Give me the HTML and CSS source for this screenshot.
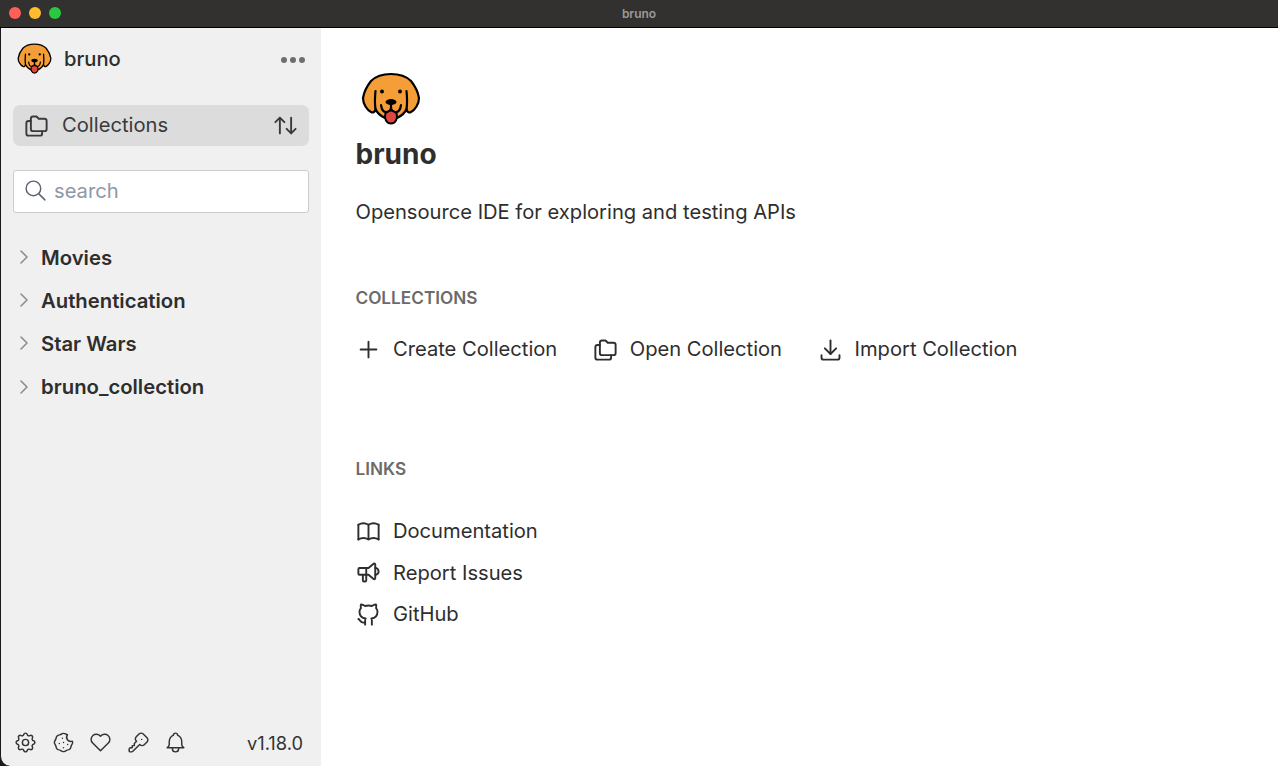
FILE: index.html
```html
<!DOCTYPE html>
<html lang="en">
<head>
    <meta charset="UTF-8">
    <title>bruno</title>
    <link rel="stylesheet" href="styles.css">
</head>
<body>
<svg class="defs" width="0" height="0">
    <symbol id="dog" viewBox="0 0 60 54">
        <path class="dog-head" d="M30 2C22 2 15 4 10 9C6 14 3 20 2 26C2 32 6 38 10 40C12 41 14 40 14.500 37C16 41 20 44 24 46L36 46C40 44 44 41 45.500 37C46 40 48 41 50 40C54 38 58 32 58 26C57 20 54 14 50 9C45 4 38 2 30 2z"/>
        <path class="dog-line" d="M14.500 37C13.500 31 14 24 14.500 19M45.500 37C46.500 31 46 24 45.500 19M20 33C20.500 37 22.500 40 25 40C28 40 30 38 30 35C30 38 32 40 35 40C37.500 40 39.500 37 40 33M30 32v3"/>
        <path class="dog-tongue" d="M24.500 41C26.500 40 28.500 38.500 30 38.500S33.500 40 35.500 41C37 46 35 51.500 30 51.500S23 46 24.500 41z"/>
        <ellipse class="dog-nose" cx="30" cy="30" rx="5.500" ry="3"/>
        <circle class="dog-nose" cx="21" cy="19.500" r="2"/>
        <circle class="dog-nose" cx="39" cy="19.500" r="2"/>
    </symbol>
</svg>

<div class="titlebar">
    <div class="lights">
        <span class="light red"></span>
        <span class="light yellow"></span>
        <span class="light green"></span>
    </div>
    <span class="window-title">bruno</span>
</div>

<div class="app">
    <!-- sidebar -->
    <div class="sidebar">
        <div class="brand">
            <div class="brand-left">
                <svg class="brand-logo"><use href="#dog"/></svg>
                <span>bruno</span>
            </div>
            <div class="dots"><i></i><i></i><i></i></div>
        </div>

        <div class="switcher">
            <div class="switcher-left">
                <svg class="icon i27" viewBox="0 0 24 24"><path d="M9 4h3l2 2h5a2 2 0 0 1 2 2v7a2 2 0 0 1-2 2h-10a2 2 0 0 1-2-2v-9a2 2 0 0 1 2-2"/><path d="M17 17v2a2 2 0 0 1-2 2h-10a2 2 0 0 1-2-2v-9a2 2 0 0 1 2-2h2"/></svg>
                <span>Collections</span>
            </div>
            <svg class="icon i27" viewBox="0 0 24 24"><path d="M3 9l4-4l4 4m-4-4v14"/><path d="M21 15l-4 4l-4-4m4 4v-14"/></svg>
        </div>

        <div class="search">
            <svg class="icon i25 thin" viewBox="0 0 24 24"><circle cx="10" cy="10" r="7"/><path d="M21 21l-6-6"/></svg>
            <span>search</span>
        </div>

        <div class="tree">
            <div class="tree-row"><svg class="icon chevron" viewBox="0 0 24 24"><path d="M9 6l6 6l-6 6"/></svg><span>Movies</span></div>
            <div class="tree-row"><svg class="icon chevron" viewBox="0 0 24 24"><path d="M9 6l6 6l-6 6"/></svg><span>Authentication</span></div>
            <div class="tree-row"><svg class="icon chevron" viewBox="0 0 24 24"><path d="M9 6l6 6l-6 6"/></svg><span>Star Wars</span></div>
            <div class="tree-row"><svg class="icon chevron" viewBox="0 0 24 24"><path d="M9 6l6 6l-6 6"/></svg><span>bruno_collection</span></div>
        </div>

        <div class="footer">
            <div class="footer-icons">
                <svg class="icon i25 thin" viewBox="0 0 24 24"><path d="M10.325 4.317c.426-1.756 2.924-1.756 3.350 0a1.724 1.724 0 0 0 2.573 1.066c1.543-.94 3.310 .826 2.370 2.370a1.724 1.724 0 0 0 1.065 2.572c1.756 .426 1.756 2.924 0 3.350a1.724 1.724 0 0 0-1.066 2.573c.94 1.543-.826 3.310-2.370 2.370a1.724 1.724 0 0 0-2.572 1.065c-.426 1.756-2.924 1.756-3.350 0a1.724 1.724 0 0 0-2.573-1.066c-1.543 .94-3.310-.826-2.370-2.370a1.724 1.724 0 0 0-1.065-2.572c-1.756-.426-1.756-2.924 0-3.350a1.724 1.724 0 0 0 1.066-2.573c-.94-1.543 .826-3.310 2.370-2.370c1 .608 2.296 .07 2.572-1.065z"/><circle cx="12" cy="12" r="3"/></svg>
                <svg class="icon i25 thin" viewBox="0 0 24 24"><path d="M8 13v.01"/><path d="M12 17v.01"/><path d="M12 12v.01"/><path d="M16 14v.01"/><path d="M11 8v.01"/><path d="M13.148 3.476l2.667 1.104a4 4 0 0 0 4.656 6.140l.053 .132a3 3 0 0 1 0 2.296c-.497 .786-.838 1.404-1.024 1.852c-.189 .456-.409 1.194-.66 2.216a3 3 0 0 1-1.624 1.623c-1.048 .263-1.787 .483-2.216 .661c-.475 .197-1.092 .538-1.852 1.024a3 3 0 0 1-2.296 0c-.802-.503-1.419-.844-1.852-1.024c-.471-.195-1.210-.415-2.216-.66a3 3 0 0 1-1.623-1.624c-.265-1.052-.485-1.790-.661-2.216c-.198-.479-.54-1.096-1.024-1.852a3 3 0 0 1 0-2.296c.48-.744 .82-1.361 1.024-1.852c.171-.413 .391-1.152 .66-2.216a3 3 0 0 1 1.624-1.623c1.032-.256 1.770-.476 2.216-.661c.458-.19 1.075-.531 1.852-1.024a3 3 0 0 1 2.296 0z"/></svg>
                <svg class="icon i25 thin" viewBox="0 0 24 24"><path d="M19.500 12.572l-7.500 7.428l-7.500-7.428a5 5 0 1 1 7.500-6.566a5 5 0 1 1 7.500 6.572"/></svg>
                <svg class="icon i25 thin" viewBox="0 0 24 24"><path d="M16.555 3.843l3.602 3.602a2.877 2.877 0 0 1 0 4.069l-2.643 2.643a2.877 2.877 0 0 1-4.069 0l-.301-.301l-6.558 6.558a2 2 0 0 1-1.239 .578l-.175 .008h-1.172a1 1 0 0 1-.993-.883l-.007-.117v-1.172a2 2 0 0 1 .467-1.284l.119-.13l.414-.414h2v-2h2v-2l2.144-2.144l-.301-.301a2.877 2.877 0 0 1 0-4.069l2.643-2.643a2.877 2.877 0 0 1 4.069 0z"/><path d="M15 9h.01"/></svg>
                <svg class="icon i25 thin" viewBox="0 0 24 24"><path d="M10 5a2 2 0 1 1 4 0a7 7 0 0 1 4 6v3a4 4 0 0 0 2 3h-16a4 4 0 0 0 2-3v-3a7 7 0 0 1 4-6"/><path d="M9 17v1a3 3 0 0 0 6 0v-1"/></svg>
            </div>
            <span class="version">v1.18.0</span>
        </div>
    </div>

    <!-- welcome page -->
    <div class="main">
        <svg class="main-logo"><use href="#dog"/></svg>
        <div class="main-title">bruno</div>
        <div class="main-sub">Opensource IDE for exploring and testing APIs</div>

        <div class="section-label">COLLECTIONS</div>
        <div class="actions">
            <div class="link">
                <svg class="icon i27" viewBox="0 0 24 24"><path d="M12 5v14"/><path d="M5 12h14"/></svg>
                <span>Create Collection</span>
            </div>
            <div class="link">
                <svg class="icon i27" viewBox="0 0 24 24"><path d="M9 4h3l2 2h5a2 2 0 0 1 2 2v7a2 2 0 0 1-2 2h-10a2 2 0 0 1-2-2v-9a2 2 0 0 1 2-2"/><path d="M17 17v2a2 2 0 0 1-2 2h-10a2 2 0 0 1-2-2v-9a2 2 0 0 1 2-2h2"/></svg>
                <span>Open Collection</span>
            </div>
            <div class="link">
                <svg class="icon i27" viewBox="0 0 24 24"><path d="M4 17v2a2 2 0 0 0 2 2h12a2 2 0 0 0 2-2v-2"/><path d="M7 11l5 5l5-5"/><path d="M12 4l0 12"/></svg>
                <span>Import Collection</span>
            </div>
        </div>

        <div class="section-label links-label">LINKS</div>
        <div class="links">
            <div class="link">
                <svg class="icon i27" viewBox="0 0 24 24"><path d="M3 19a9 9 0 0 1 9 0a9 9 0 0 1 9 0"/><path d="M3 6a9 9 0 0 1 9 0a9 9 0 0 1 9 0"/><path d="M3 6l0 13"/><path d="M12 6l0 13"/><path d="M21 6l0 13"/></svg>
                <span>Documentation</span>
            </div>
            <div class="link">
                <svg class="icon i27" viewBox="0 0 24 24"><path d="M18 8a3 3 0 0 1 0 6"/><path d="M10 8v11a1 1 0 0 1-1 1h-1a1 1 0 0 1-1-1v-5"/><path d="M12 8h0l4.524-3.770a.9 .9 0 0 1 1.476 .692v12.156a.9 .9 0 0 1-1.476 .692l-4.524-3.770h-8a1 1 0 0 1-1-1v-4a1 1 0 0 1 1-1h8"/></svg>
                <span>Report Issues</span>
            </div>
            <div class="link">
                <svg class="icon i27" viewBox="0 0 24 24"><path d="M9 19c-4.300 1.400-4.300-2.500-6-3m12 5v-3.500c0-1 .1-1.400-.5-2c2.800-.3 5.500-1.400 5.500-6a4.600 4.600 0 0 0-1.300-3.200a4.200 4.200 0 0 0-.1-3.200s-1.100-.3-3.500 1.300a12.300 12.300 0 0 0-6.200 0c-2.400-1.600-3.500-1.300-3.500-1.300a4.200 4.200 0 0 0-.1 3.200a4.600 4.600 0 0 0-1.300 3.200c0 4.600 2.700 5.700 5.500 6c-.6 .6-.6 1.200-.5 2v3.500"/></svg>
                <span>GitHub</span>
            </div>
        </div>
    </div>
</div>
</body>
</html>
```

FILE: styles.css
```css
*{
    margin: 0;
    padding: 0;
    box-sizing: border-box;
}
html,body{
    height: 100%;
    overflow: hidden;
}
body{
    display: flex;
    flex-direction: column;
    font-family: Inter, "Liberation Sans", sans-serif;
    color: #2e2e2e;
    background: #1a1a1a;
}
.defs{
    position: absolute;
}
.icon{
    flex: none;
    fill: none;
    stroke: currentColor;
    stroke-width: 1.7;
    stroke-linecap: round;
    stroke-linejoin: round;
}
.icon.thin{
    stroke-width: 1.4;
}
.i25{
    width: 25px;
    height: 25px;
}
.i27{
    width: 27px;
    height: 27px;
}

/* title bar */
.titlebar{
    flex: none;
    height: 28px;
    display: flex;
    align-items: center;
    justify-content: center;
    position: relative;
    background: #323130;
    border-bottom: 1px solid #000;
}
.lights{
    position: absolute;
    left: 9px;
    top: 7px;
    display: flex;
    gap: 8px;
}
.light{
    width: 12px;
    height: 12px;
    border-radius: 50%;
}
.red{
    background: #ff5f57;
}
.yellow{
    background: #febc2e;
}
.green{
    background: #28c840;
}
.window-title{
    font-size: 12px;
    font-weight: 600;
    color: #9a9a9a;
}

.app{
    flex: 1;
    display: flex;
    min-height: 0;
}

/* sidebar */
.sidebar{
    flex: none;
    width: 321px;
    display: flex;
    flex-direction: column;
    padding: 0 12px 0 13px;
    background: #f0f0f0;
    border-left: 1px solid #1a1a1a;
    border-bottom-left-radius: 10px;
}
.brand{
    height: 62px;
    display: flex;
    align-items: center;
    justify-content: space-between;
    padding: 0 4px 0 3px;
}
.brand-left{
    display: flex;
    align-items: center;
    gap: 12px;
    font-size: 20.200px;
    font-weight: 500;
}
.brand-left span{
    padding-bottom: 2px;
}
.brand-logo{
    width: 35px;
    height: 31.500px;
}
.dots{
    display: flex;
    gap: 3px;
    padding-top: 2px;
}
.dots i{
    width: 6px;
    height: 6px;
    border-radius: 50%;
    background: #6e6e6e;
}
.switcher{
    margin: 15px 0 0 -1px;
    height: 41px;
    display: flex;
    align-items: center;
    justify-content: space-between;
    padding: 0 10px;
    font-size: 20.200px;
    color: #3a3a3a;
    background: #dcdcdc;
    border-radius: 7px;
}
.switcher-left{
    display: flex;
    align-items: center;
    gap: 12px;
}
.switcher-left span{
    padding-bottom: 2px;
}
.search{
    margin: 24px 0 0 -1px;
    height: 43px;
    display: flex;
    align-items: center;
    gap: 6px;
    padding: 0 9px 2px;
    font-size: 20.200px;
    color: #8e98a6;
    background: #fff;
    border: 1px solid #cccccc;
    border-radius: 3px;
}
.search .icon{
    color: #5c6470;
}
.tree{
    margin-top: 22.500px;
}
.tree-row{
    height: 43.200px;
    display: flex;
    align-items: center;
    gap: 5px;
    margin-left: -2px;
    font-size: 20.300px;
    font-weight: 600;
}
.chevron{
    width: 24px;
    height: 24px;
    color: #8a8a8a;
    stroke-width: 1.5;
}
.footer{
    margin-top: auto;
    height: 48px;
    display: flex;
    align-items: center;
    justify-content: space-between;
    padding: 0 6px 0 0;
    color: #333;
}
.footer-icons{
    display: flex;
    align-items: center;
    gap: 12.500px;
    margin-left: -1px;
}
.version{
    font-size: 18.300px;
    padding-top: 2px;
}

/* welcome page */
.main{
    flex: 1;
    padding: 44px 0 0 34.500px;
    background: #fff;
}
.main-logo{
    display: block;
    width: 60px;
    height: 54px;
    margin-left: 5px;
}
.main-title{
    margin-top: 10px;
    font-size: 28px;
    font-weight: 700;
    line-height: 36px;
}
.main-sub{
    margin-top: 26px;
    font-size: 20.150px;
    line-height: 28px;
}
.section-label{
    margin-top: 60px;
    font-size: 17.200px;
    font-weight: 600;
    line-height: 24px;
    color: #6b6b6b;
}
.actions{
    margin-top: 25px;
    display: flex;
    gap: 35px;
}
.links-label{
    margin-top: 94px;
}
.links{
    margin-top: 36px;
    display: flex;
    flex-direction: column;
    gap: 13.500px;
}
.link{
    display: flex;
    align-items: center;
    gap: 11px;
    font-size: 20.150px;
    line-height: 28px;
}
.link .icon{
    margin-left: -0.500px;
}

/* dog logo */
.dog-head{
    fill: #f59e38;
    stroke: #000;
    stroke-width: 2.200;
    stroke-linejoin: round;
}
.dog-line{
    fill: none;
    stroke: #000;
    stroke-width: 2.200;
    stroke-linecap: round;
    stroke-linejoin: round;
}
.dog-tongue{
    fill: #e2473f;
    stroke: #000;
    stroke-width: 2;
}
.dog-nose{
    fill: #000;
}
```
